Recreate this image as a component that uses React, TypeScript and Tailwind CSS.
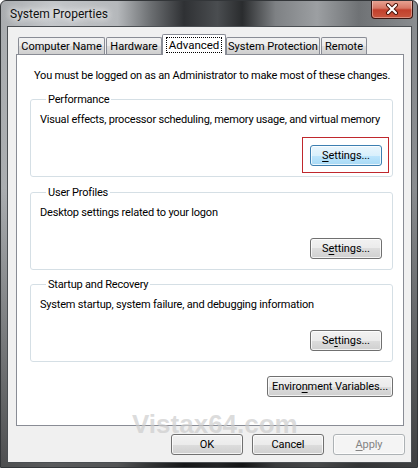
import React from 'react';

type Variant = 'normal' | 'default' | 'disabled';

const BTN: Record<Variant, string> = {
  normal:
    'border-[#707070] bg-[linear-gradient(180deg,#f2f2f2_0%,#ebebeb_50%,#dddddd_50%,#cfcfcf_100%)] text-black',
  default:
    'border-[#3c7fb1] bg-[linear-gradient(180deg,#eaf6fd_0%,#d9f0fc_50%,#bee6fd_50%,#a7d9f5_100%)] text-black',
  disabled: 'border-[#adb2b5] bg-[#f4f4f4] text-[#838383]',
};

const Btn: React.FC<{ label: React.ReactNode; w: string; variant?: Variant }> = ({
  label,
  w,
  variant = 'normal',
}) => (
  <button
    className={`h-[21px] ${w} rounded-[3px] border ${BTN[variant]} shadow-[inset_0_0_0_1px_rgba(255,255,255,0.75)] text-[11px] tracking-[-0.1px] leading-[15px] whitespace-nowrap flex items-center justify-center`}
  >
    {label}
  </button>
);

// underline one letter, like a Windows access key
const Key: React.FC<{ pre: string; k: string; post: string }> = ({ pre, k, post }) => (
  <span>
    {pre}
    <span className="underline underline-offset-2">{k}</span>
    {post}
  </span>
);

const Group: React.FC<{
  title: string;
  desc: string;
  button: React.ReactNode;
  className?: string;
}> = ({ title, desc, button, className = '' }) => (
  <fieldset className={`min-w-0 border border-[#d5dfe5] rounded-[3px] pl-[9px] pr-[10px] pb-[10px] ${className}`}>
    <legend className="ml-[6px] px-[2px] leading-[15px] whitespace-nowrap">{title}</legend>
    <p className="mt-[5px] leading-[15px] whitespace-nowrap">{desc}</p>
    <div className="flex justify-end mt-[18px]">{button}</div>
  </fieldset>
);

const tabs = [
  { label: 'Computer Name', w: 'w-[87px]', cls: 'mr-[1px]' },
  { label: 'Hardware', w: 'w-[56px]', cls: '' },
  { label: 'Advanced', w: 'w-[64px]', cls: '', active: true },
  { label: 'System Protection', w: 'w-[94px]', cls: 'mr-[1px]' },
  { label: 'Remote', w: 'w-[46px]', cls: '' },
];

export default function App() {
  return (
    <div
      className="w-[418px] h-[468px] flex flex-col border border-[#333639] rounded-t-[6px] pl-[6px] pr-[5px] pb-[4px] overflow-hidden bg-[linear-gradient(180deg,rgba(0,0,0,0)_0%,rgba(0,0,0,0)_40%,rgba(0,0,0,0.55)_100%),linear-gradient(90deg,#a9acaf_0%,#c3c6c9_12%,#b5b8bb_28%,#6c6f72_36%,#2f3134_44%,#4a4d50_52%,#2a2c2e_58%,#7e8184_66%,#9c9fa2_76%,#6f7275_86%,#8a8d90_100%)] text-[11px] tracking-[-0.2px] text-black [font-family:Roboto,sans-serif]"
    >
      {/* title bar */}
      <div className="h-[25px] flex justify-between shrink-0 -mr-[5px] -ml-[6px] pl-[9px] pr-[4px]">
        <div className="flex items-center text-[12px] tracking-normal whitespace-nowrap [text-shadow:0_0_6px_#ffffff,0_0_10px_#ffffff] text-[#111]">
          System Properties
        </div>
        <div className="-mt-[1px] w-[42px] h-[19px] rounded-b-[4px] border border-t-0 border-[#3b1510] bg-[linear-gradient(180deg,#e9a797_0%,#d77866_45%,#c2402c_55%,#c9563e_100%)] shadow-[inset_0_0_0_1px_rgba(255,255,255,0.35)] flex items-center justify-center">
          <svg width="14" height="12" viewBox="0 0 14 12">
            <path d="M3 2 L11 10 M11 2 L3 10" stroke="#4a1208" strokeWidth="4" strokeLinecap="round" />
            <path d="M3 2 L11 10 M11 2 L3 10" stroke="#ffffff" strokeWidth="2.2" strokeLinecap="round" />
          </svg>
        </div>
      </div>

      {/* client area */}
      <div className="relative flex-1 bg-[#f0f0f0] border border-[#4b4f53] pl-[8px] pr-[7px] pt-[7px] flex flex-col">
        <div className="flex items-end pl-[2px]">
          {tabs.map((t) =>
            t.active ? (
              <div
                key={t.label}
                className={`${t.w} h-[21px] -mb-[1px] relative z-10 bg-white border border-b-0 border-[#898c95] rounded-t-[2px] flex items-start justify-center pt-[2px] whitespace-nowrap text-[11.5px] tracking-normal`}
              >
                <span className="border border-dotted border-black px-[2px] leading-[14px]">{t.label}</span>
              </div>
            ) : (
              <div
                key={t.label}
                className={`${t.w} ${t.cls} h-[17px] border border-b-0 border-[#898c95] rounded-t-[2px] bg-[linear-gradient(180deg,#f2f2f2_0%,#ebebeb_50%,#dddddd_50%,#cfcfcf_100%)] flex items-center justify-center leading-[15px] whitespace-nowrap tracking-normal`}
              >
                {t.label}
              </div>
            )
          )}
        </div>

        <div className="w-[388px] h-[372px] bg-white border border-[#898c95] pt-[13px] pl-[13px] pr-[10px] flex flex-col">
          <p className="ml-[4px] leading-[15px] whitespace-nowrap">
            You must be logged on as an Administrator to make most of these changes.
          </p>

          <Group
            className="mt-[9px]"
            title="Performance"
            desc="Visual effects, processor scheduling, memory usage, and virtual memory"
            button={
              <div className="relative">
                <Btn w="w-[72px]" variant="default" label={<Key pre="" k="S" post="ettings..." />} />
                <div className="absolute -top-[8px] -left-[8px] -right-[7px] -bottom-[7px] border border-[#c0282d]" />
              </div>
            }
          />
          <Group
            className="mt-[8px]"
            title="User Profiles"
            desc="Desktop settings related to your logon"
            button={<Btn w="w-[72px]" label={<Key pre="S" k="e" post="ttings..." />} />}
          />
          <Group
            className="mt-[7px]"
            title="Startup and Recovery"
            desc="System startup, system failure, and debugging information"
            button={<Btn w="w-[72px]" label={<Key pre="Se" k="t" post="tings..." />} />}
          />

          <div className="flex justify-end mt-[14px]">
            <Btn w="w-[126px]" label={<Key pre="Enviro" k="n" post="ment Variables..." />} />
          </div>
        </div>

        <div className="flex justify-end gap-[9px] mt-[8px] -mr-[1px]">
          <Btn w="w-[72px]" label="OK" />
          <Btn w="w-[72px]" label="Cancel" />
          <Btn w="w-[72px]" variant="disabled" label={<Key pre="" k="A" post="pply" />} />
        </div>

        {/* site watermark */}
        <div className="absolute left-[124px] top-[383px] text-[26px] font-bold tracking-normal leading-[28px] text-[rgba(205,205,205,0.7)] [font-family:'Liberation_Sans',sans-serif] whitespace-nowrap pointer-events-none">
          Vistax64.com
        </div>
      </div>
    </div>
  );
}
